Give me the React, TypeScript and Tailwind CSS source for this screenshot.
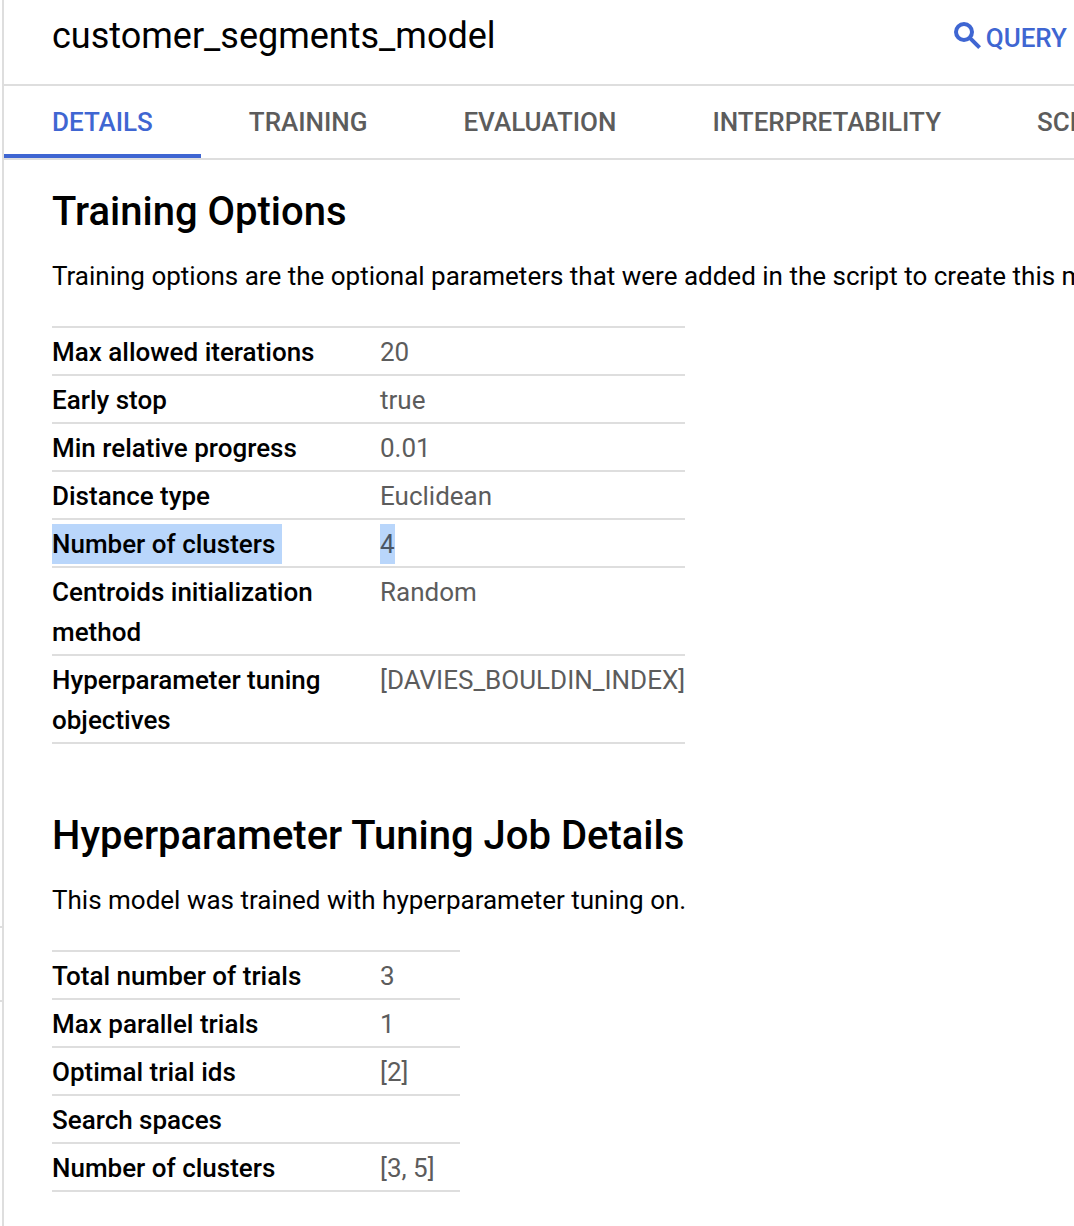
import React from "react";

const tabs = [
  { label: "DETAILS", active: true },
  { label: "TRAINING" },
  { label: "EVALUATION" },
  { label: "INTERPRETABILITY" },
  { label: "SCHEMA" },
];

type Row = { name: string; value: string; selected?: boolean };

const training: Row[] = [
  { name: "Max allowed iterations", value: "20" },
  { name: "Early stop", value: "true" },
  { name: "Min relative progress", value: "0.01" },
  { name: "Distance type", value: "Euclidean" },
  { name: "Number of clusters", value: "4", selected: true },
  { name: "Centroids initialization method", value: "Random" },
  { name: "Hyperparameter tuning objectives", value: "[DAVIES_BOULDIN_INDEX]" },
];

const tuning: Row[] = [
  { name: "Total number of trials", value: "3" },
  { name: "Max parallel trials", value: "1" },
  { name: "Optimal trial ids", value: "[2]" },
  { name: "Search spaces", value: "" },
  { name: "Number of clusters", value: "[3, 5]" },
];

function Table({ rows, width }: { rows: Row[]; width: string }) {
  return (
    <dl className={`${width} border-t-2 border-[#dedede] text-[26px] leading-[40px]`}>
      {rows.map((r) => (
        <div key={r.name} className="flex border-b-2 border-[#dedede] pt-1 pb-0.5">
          <dt className="w-[328px] shrink-0 pr-12 font-medium text-black">
            <span className={r.selected ? "inline-block h-10 w-[230px] bg-[#b9d6fb]" : ""}>{r.name}</span>
          </dt>
          <dd className="whitespace-nowrap text-[#5c5c5c]">
            <span className={r.selected ? "inline-block h-10 bg-[#b9d6fb] text-[#4b5665]" : ""}>{r.value}</span>
          </dd>
        </div>
      ))}
    </dl>
  );
}

export default function App() {
  return (
    <div className="flex h-[1226px] w-[1074px] overflow-hidden bg-white font-['Roboto',sans-serif] text-black">
      <div className="flex w-1 shrink-0 flex-col border-r-2 border-[#dedede]">
        <div className="h-[928px] border-b-2 border-[#dedede]" />
        <div className="h-[74px] border-b-2 border-[#dedede]" />
      </div>
      <main className="min-w-0 flex-1 overflow-hidden">
        <header className="flex h-[86px] items-start justify-between border-b-2 border-[#dedede] pl-12 pr-[7px]">
          <h1 className="pt-4 text-[36px] leading-[40px]">customer_segments_model</h1>
          <button className="flex items-start pt-[18px] text-[26px] font-medium leading-[40px] text-[#3f66d2]">
            <svg viewBox="0 0 27 27" className="mt-1 mr-[5px] h-[27px] w-[27px]" fill="none" stroke="currentColor">
              <circle cx="10" cy="10" r="8" strokeWidth="4" />
              <path d="M15.3 15.3 25.6 25.6" strokeWidth="4" />
            </svg>
            QUERY
          </button>
        </header>
        <nav className="flex h-[74px] border-b-2 border-[#dedede] text-[26px] font-medium leading-[40px] tracking-[-0.02px] text-[#5c5c5c]">
          {tabs.map((t) => (
            <button
              key={t.label}
              className={t.active ? "shrink-0 border-b-4 border-[#3f66d2] px-12 pt-1 text-[#3f66d2]" : "shrink-0 border-b-4 border-transparent px-12 pt-1"}
            >
              {t.label}
            </button>
          ))}
        </nav>
        <section className="pl-12">
          <h2 className="pt-[28px] text-[40px] font-medium leading-[48px]">Training Options</h2>
          <p className="pb-[30px] pt-[20px] whitespace-nowrap text-[26px] leading-[40px]">
            Training options are the optional parameters that were added in the script to create this model.
          </p>
          <Table rows={training} width="w-[633px]" />
        </section>
        <section className="pl-12">
          <h2 className="pt-[68px] text-[40px] font-medium leading-[48px]">Hyperparameter Tuning Job Details</h2>
          <p className="pb-[30px] pt-[20px] whitespace-nowrap text-[26px] leading-[40px]">
            This model was trained with hyperparameter tuning on.
          </p>
          <Table rows={tuning} width="w-[408px]" />
        </section>
      </main>
    </div>
  );
}
